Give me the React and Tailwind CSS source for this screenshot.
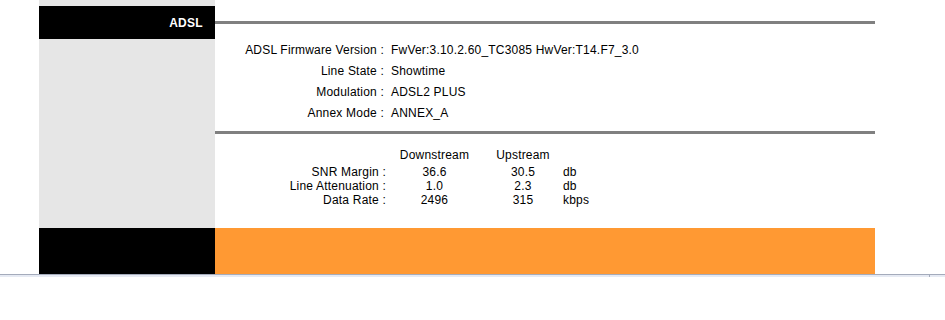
import React from "react";

const info = [
  { label: "ADSL Firmware Version", value: "FwVer:3.10.2.60_TC3085 HwVer:T14.F7_3.0" },
  { label: "Line State", value: "Showtime" },
  { label: "Modulation", value: "ADSL2 PLUS" },
  { label: "Annex Mode", value: "ANNEX_A" },
];

const stats = [
  { label: "SNR Margin", down: "36.6", up: "30.5", unit: "db" },
  { label: "Line Attenuation", down: "1.0", up: "2.3", unit: "db" },
  { label: "Data Rate", down: "2496", up: "315", unit: "kbps" },
];

const App = () => {
  return (
    <div className="w-[945px] h-[320px] bg-white text-[12px] text-black font-['Liberation_Sans',Arial,sans-serif]">
      <div className="flex pl-[39px]">
        {/* left nav column */}
        <div className="w-[176px] h-[228px] bg-[#e6e6e6] pt-[6px]">
          <div className="h-[33px] bg-black flex items-center justify-end pr-[12px] text-white font-bold text-[12px] tracking-[0.3px]">
            ADSL
          </div>
        </div>

        {/* content */}
        <div className="w-[660px] h-[228px] bg-white pt-[21px] tracking-[0.2px]">
          <div className="h-[3px] bg-[#808080]" />

          <div className="mt-[16px]">
            {info.map((r) => (
              <div key={r.label} className="flex h-[21px] leading-[21px]">
                <div className="w-[169px] text-right whitespace-nowrap">{r.label} :</div>
                <div className="pl-[7px] whitespace-nowrap">{r.value}</div>
              </div>
            ))}
          </div>

          <div className="mt-[7px] h-[3px] bg-[#808080]" />

          <div className="mt-[14px] grid grid-cols-[171px_97px_80px_60px]">
            <div className="h-[17px] leading-[15px]" />
            <div className="h-[17px] leading-[15px] text-center">Downstream</div>
            <div className="h-[17px] leading-[15px] text-center">Upstream</div>
            <div className="h-[17px]" />
            {stats.map((s) => (
              <React.Fragment key={s.label}>
                <div className="h-[14px] leading-[14px] text-right whitespace-nowrap">{s.label} :</div>
                <div className="h-[14px] leading-[14px] text-center">{s.down}</div>
                <div className="h-[14px] leading-[14px] text-center">{s.up}</div>
                <div className="h-[14px] leading-[14px]">{s.unit}</div>
              </React.Fragment>
            ))}
          </div>
        </div>
      </div>

      {/* footer bar */}
      <div className="flex pl-[39px] h-[46px]">
        <div className="w-[176px] bg-black" />
        <div className="w-[660px] bg-[#ff9933]" />
      </div>

      {/* bottom frame edge */}
      <div className="h-px bg-[#a4abbb]" />
      <div className="relative h-[2px] bg-[#e6eaf3]">
        <div className="absolute left-[929px] top-0 w-px h-[2px] bg-[#a4abbb]" />
      </div>
    </div>
  );
};

export default App;
